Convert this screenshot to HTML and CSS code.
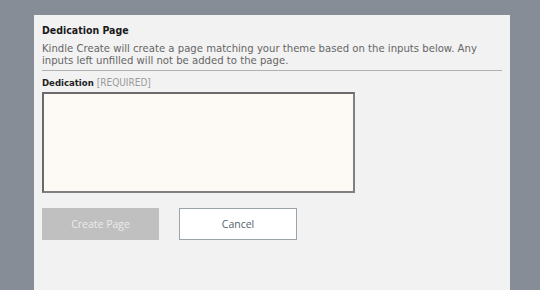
FILE: index.html
```html
<!DOCTYPE html>
<html lang="en">
<head>
  <meta charset="UTF-8" />
  <title>Dedication Page</title>
  <link rel="stylesheet" href="styles.css">
</head>
<body>
  <div class="panel">
    <h2>Dedication Page</h2>
    <p class="intro">Kindle Create will create a page matching your theme based on the inputs below. Any inputs left unfilled will not be added to the page.</p>
    <hr>
    <label for="dedication">Dedication <span class="req">[REQUIRED]</span></label>
    <textarea id="dedication"></textarea>
    <div class="button-group">
      <button type="button" class="primary" disabled>Create Page</button>
      <button type="button" class="secondary">Cancel</button>
    </div>
  </div>
</body>
</html>
```

FILE: styles.css
```css
html, body {
  margin: 0;
  padding: 0;
  height: 100%;
  background-color: #878d96;
  font-family: 'DejaVu Sans Condensed', 'DejaVu Sans', Tahoma, sans-serif;
  color: #222;
}

body {
  padding: 15px 30px 0 34px;
  box-sizing: border-box;
  overflow: hidden;
}

.panel {
  background-color: #f2f2f2;
  height: 275px;
  padding: 8px 8px 0 8px;
  box-sizing: border-box;
}

h2 {
  font-size: 10.5px;
  font-weight: 700;
  margin: 0 0 6px;
  line-height: 14px;
  color: #1a1a1a;
}

.intro {
  font-family: 'DejaVu Sans', Tahoma, sans-serif;
  font-size: 10.1px;
  line-height: 12px;
  margin: 0;
  color: #666;
}

hr {
  border: none;
  border-top: 1px solid #b0b0b0;
  margin: 3px 0 6px;
}

label {
  display: block;
  font-size: 9.5px;
  font-weight: 700;
  line-height: 12px;
  color: #222;
}

.req {
  font-size: 10px;
  font-weight: 400;
  color: #9a9a9a;
}

textarea {
  display: block;
  width: 313px;
  height: 101px;
  margin-top: 3px;
  box-sizing: border-box;
  border: 2px solid #6a6a6a;
  border-right-color: #808080;
  border-bottom-color: #808080;
  background-color: #fdfaf5;
  resize: none;
  padding: 0;
}

.button-group {
  display: flex;
  gap: 20px;
  margin-top: 15px;
}

button {
  width: 117px;
  height: 32px;
  font-family: 'Open Sans', 'Noto Sans', sans-serif;
  font-size: 10.5px;
  box-sizing: border-box;
  padding: 0;
}

.primary {
  background-color: #c0c0c0;
  border: none;
  color: #ececec;
}

.secondary {
  width: 118px;
  background-color: #fff;
  border: 1px solid #9aa4a8;
  color: #56636a;
}
```
